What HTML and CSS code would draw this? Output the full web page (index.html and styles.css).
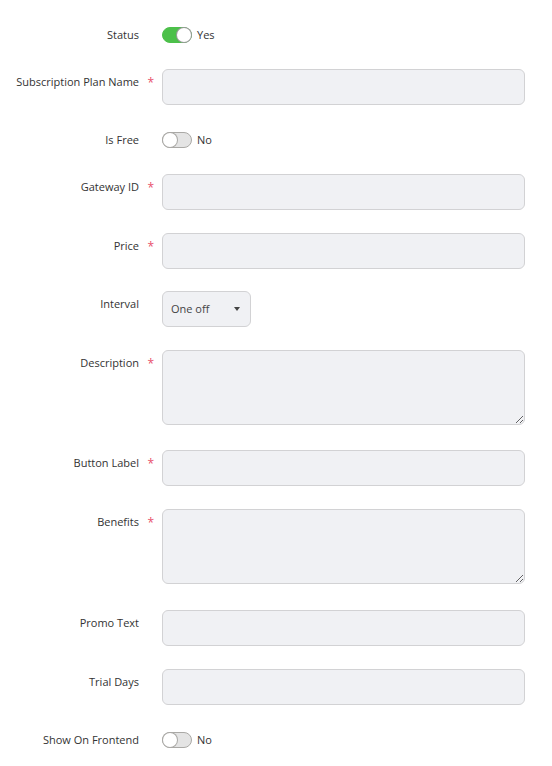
FILE: index.html
```html
<!DOCTYPE html>
<html>
<head>
<meta charset="utf-8">
<link rel="stylesheet" href="styles.css">
</head>
<body>
<form class="form">
  <div class="row row-toggle">
    <div class="label">Status</div>
    <div class="field"><span class="toggle on"><span class="knob"></span></span><span class="toggle-text">Yes</span></div>
  </div>
  <div class="row">
    <div class="label">Subscription Plan Name<span class="req">*</span></div>
    <div class="field"><input class="input" type="text"></div>
  </div>
  <div class="row row-toggle">
    <div class="label">Is Free</div>
    <div class="field"><span class="toggle"><span class="knob"></span></span><span class="toggle-text">No</span></div>
  </div>
  <div class="row">
    <div class="label">Gateway ID<span class="req">*</span></div>
    <div class="field"><input class="input" type="text"></div>
  </div>
  <div class="row">
    <div class="label">Price<span class="req">*</span></div>
    <div class="field"><input class="input" type="text"></div>
  </div>
  <div class="row">
    <div class="label">Interval</div>
    <div class="field"><div class="select"><span>One off</span><span class="caret"></span></div></div>
  </div>
  <div class="row">
    <div class="label">Description<span class="req">*</span></div>
    <div class="field field-area"><textarea class="input textarea"></textarea></div>
  </div>
  <div class="row">
    <div class="label">Button Label<span class="req">*</span></div>
    <div class="field"><input class="input" type="text"></div>
  </div>
  <div class="row">
    <div class="label">Benefits<span class="req">*</span></div>
    <div class="field field-area field-area-lg"><textarea class="input textarea"></textarea></div>
  </div>
  <div class="row">
    <div class="label">Promo Text</div>
    <div class="field"><input class="input" type="text"></div>
  </div>
  <div class="row">
    <div class="label">Trial Days</div>
    <div class="field"><input class="input" type="text"></div>
  </div>
  <div class="row row-toggle row-last">
    <div class="label">Show On Frontend</div>
    <div class="field"><span class="toggle"><span class="knob"></span></span><span class="toggle-text">No</span></div>
  </div>
</form>
</body>
</html>
```
FILE: styles.css
```css
* { box-sizing: border-box; }
html, body { margin: 0; padding: 0; background: #fff; }
body {
  font-family: "Open Sans", "Liberation Sans", sans-serif;
  font-size: 11px;
  color: #333;
}
.form {
  display: flex;
  flex-direction: column;
  gap: 22.5px;
  padding: 22.5px 27px 0 0;
}
.row {
  display: grid;
  grid-template-columns: 162px 1fr;
  align-items: start;
}
.row-toggle { align-items: center; height: 24px; }
.row-last { margin-top: 1px; }
.label {
  display: flex;
  justify-content: flex-end;
  padding-right: 23px;
  padding-top: 4px;
  line-height: 18px;
  color: #333;
  position: relative;
}
.row-toggle .label { padding-top: 0; }
.req {
  position: absolute;
  right: 8px;
  top: 5px;
  color: #e8506b;
  font-size: 12px;
}
.field { display: flex; align-items: center; }
.field-area { height: 78px; align-items: flex-start; }
.field-area-lg { height: 79px; }
.input {
  display: block;
  width: 100%;
  height: 36px;
  background: #f0f1f4;
  border: 1px solid #d2d2d4;
  border-radius: 6px;
  font-family: inherit;
  font-size: 11px;
  padding: 0 10px;
  outline: none;
}
.textarea { height: 75px; resize: vertical; padding: 8px 10px; }
.select {
  width: 89px;
  height: 36px;
  background: #f0f1f4;
  border: 1px solid #d2d2d4;
  border-radius: 6px;
  display: flex;
  align-items: center;
  justify-content: space-between;
  padding: 0 10px 1px 8px;
  color: #444;
}
.caret {
  width: 0; height: 0;
  border-left: 3px solid transparent;
  border-right: 3px solid transparent;
  border-top: 4px solid #444;
}
.toggle {
  width: 30px;
  height: 16px;
  border-radius: 8px;
  background: #e4e4e4;
  border: 1px solid #aaa9a6;
  position: relative;
  display: inline-block;
}
.toggle .knob {
  position: absolute;
  top: 0; left: 0;
  width: 14px; height: 14px;
  border-radius: 50%;
  background: #fff;
  box-shadow: 0 0 0 1px #aaa9a6;
}
.toggle.on { background: #4cc04a; border-color: #4cc04a; }
.toggle.on .knob { left: auto; right: 0; box-shadow: 0 0 0 1px #9a9a9a; }
.toggle-text { margin-left: 5px; color: #333; line-height: 18px; }
```
